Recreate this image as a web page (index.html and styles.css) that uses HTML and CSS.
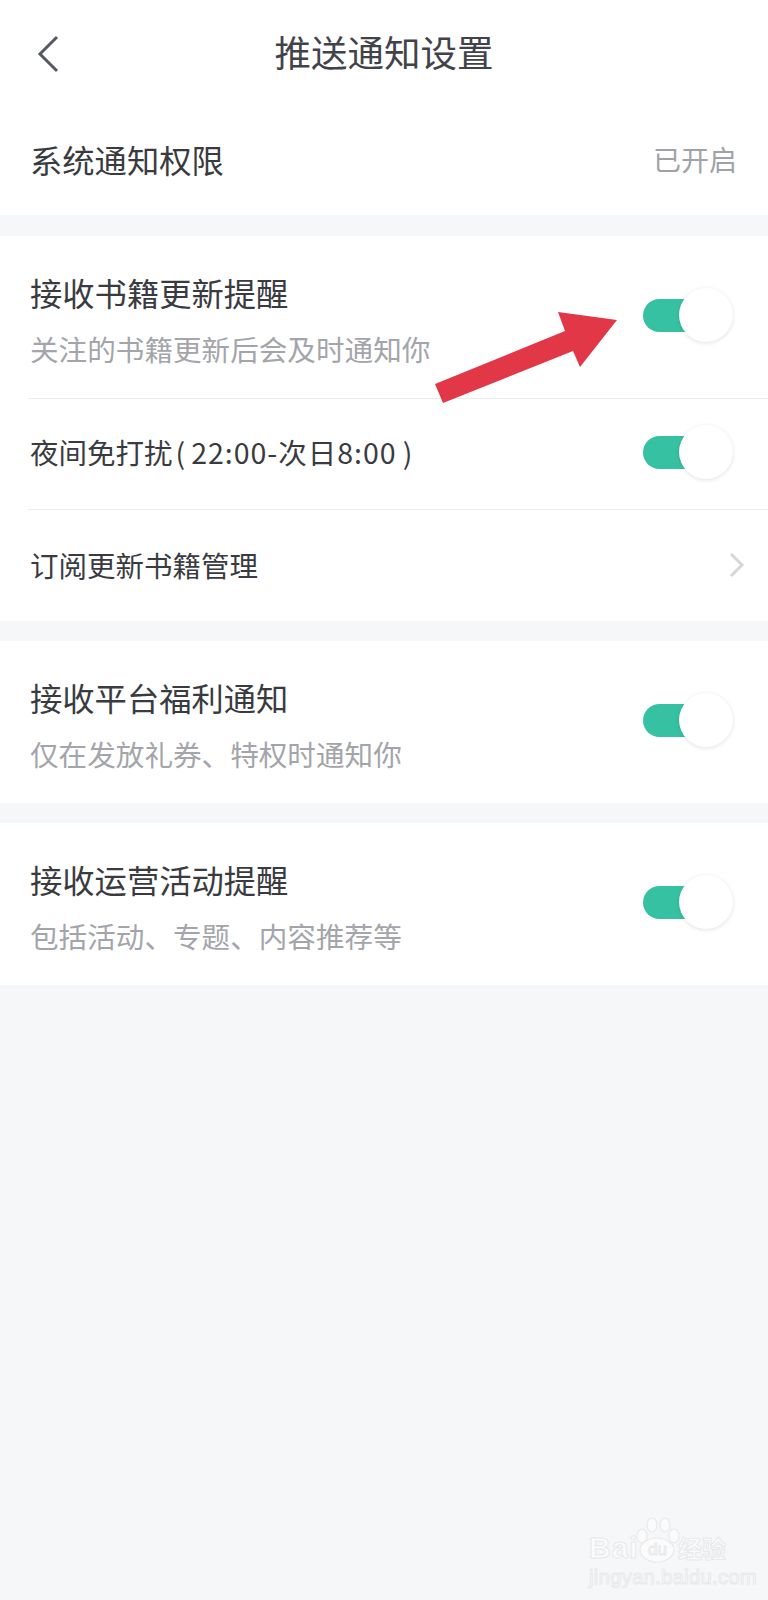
FILE: index.html
```html
<!DOCTYPE html>
<html lang="zh-CN">
<head>
	<meta charset="UTF-8">
	<title>推送通知设置</title>
	<link rel="stylesheet" href="styles.css">
</head>
<body>
	<div id="app">
		<header class="nav">
			<svg class="back" width="24" height="38" viewBox="0 0 24 38">
				<path d="M21 2 L4 19 L21 36" fill="none" stroke="#565960" stroke-width="3"/>
			</svg>
			<h1 class="nav-title">推送通知设置</h1>
		</header>

		<section class="group system">
			<div class="row row-system">
				<span class="label-lg">系统通知权限</span>
				<span class="status">已开启</span>
			</div>
		</section>

		<section class="group">
			<div class="row row-tall">
				<div class="text">
					<p class="label-lg">接收书籍更新提醒</p>
					<p class="sub">关注的书籍更新后会及时通知你</p>
				</div>
				<span class="toggle"></span>
			</div>
			<div class="row row-line">
				<span class="label label-night">夜间免打扰<span class="paren">(</span><span class="time">22:00-次日8:00</span><span class="paren">)</span></span>
				<span class="toggle"></span>
			</div>
			<div class="row row-line">
				<span class="label">订阅更新书籍管理</span>
				<svg class="more" width="18" height="26" viewBox="0 0 18 26">
					<path d="M3 2 L14 13 L3 24" fill="none" stroke="#d6d7da" stroke-width="3"/>
				</svg>
			</div>
		</section>

		<section class="group">
			<div class="row row-tall">
				<div class="text">
					<p class="label-lg">接收平台福利通知</p>
					<p class="sub">仅在发放礼券、特权时通知你</p>
				</div>
				<span class="toggle"></span>
			</div>
		</section>

		<section class="group">
			<div class="row row-tall">
				<div class="text">
					<p class="label-lg">接收运营活动提醒</p>
					<p class="sub">包括活动、专题、内容推荐等</p>
				</div>
				<span class="toggle"></span>
			</div>
		</section>

		<!-- red arrow drawn on top of the screenshot -->
		<svg class="arrow" width="768" height="420" viewBox="0 0 768 420">
			<polygon points="435,384 443,403 573,351 580,367 617,320 558,312 565,331" fill="#e13747"/>
		</svg>

		<div class="mark">
			<div class="mark-top">
				<span class="mark-bai">Bai</span>
				<span class="mark-paw">
					<svg width="44" height="46" viewBox="0 0 44 46">
						<g fill="#fbfbfc" stroke="#e8e9eb" stroke-width="1.2">
							<ellipse cx="6" cy="19" rx="5" ry="7"/>
							<ellipse cx="16" cy="8" rx="5" ry="7"/>
							<ellipse cx="29" cy="8" rx="5" ry="7"/>
							<ellipse cx="38" cy="19" rx="5" ry="7"/>
							<ellipse cx="21" cy="33" rx="17" ry="12"/>
						</g>
					</svg>
					<span class="mark-du">du</span>
				</span>
				<span class="mark-cn">经验</span>
			</div>
			<div class="mark-url">jingyan.baidu.com</div>
		</div>
	</div>
</body>
</html>
```

FILE: styles.css
```css
* {
	margin: 0;
	padding: 0;
	box-sizing: border-box;
}
html, body {
	height: 100%;
}
body {
	background-color: #f6f7f9;
	color: #3a3b41;
	font-family: "Noto Sans CJK SC", "Noto Sans", sans-serif;
}
#app {
	position: relative;
	width: 768px;
	height: 1600px;
	overflow: hidden;
}
.nav {
	position: relative;
	height: 108px;
	padding-bottom: 4px;
	background-color: #fff;
	display: flex;
	align-items: center;
	justify-content: center;
}
.back {
	position: absolute;
	left: 36px;
	top: 35px;
}
.nav-title {
	font-size: 36.5px;
	font-weight: 400;
	line-height: 50px;
	color: #42434a;
}
.group {
	background-color: #fff;
	margin-bottom: 20px;
}
.system {
	margin-bottom: 21px;
}
.row {
	display: flex;
	align-items: center;
	justify-content: space-between;
	padding-left: 30px;
}
.row-system {
	height: 107px;
	padding-right: 31px;
	padding-bottom: 6px;
}
.row-tall {
	height: 162px;
	padding-right: 35px;
}
.row-tall .text {
	padding-top: 5px;
}
.row-line {
	height: 111px;
	padding-right: 22px;
	position: relative;
}
.row-line:last-child {
	height: 112px;
}
.row-line::before {
	content: "";
	position: absolute;
	left: 28px;
	right: 0;
	top: 0;
	height: 1px;
	background-color: #ececee;
}
.row-line .toggle {
	margin-right: 13px;
}
.label-lg {
	display: block;
	font-size: 32.3px;
	line-height: 40px;
}
.label {
	font-size: 28.5px;
	line-height: 40px;
}
.label-night {
	margin-bottom: 4px;
}
.time {
	letter-spacing: 1px;
}
.paren {
	margin: 0 6px 0 3px;
}
.label .paren:last-child {
	margin: 0 0 0 6px;
}
.status {
	font-size: 28px;
	color: #a0a2a7;
}
.sub {
	margin-top: 19px;
	font-size: 28.6px;
	line-height: 36px;
	color: #a3a5aa;
}
.toggle {
	position: relative;
	flex: none;
	width: 90px;
	height: 54px;
	margin-bottom: 4px;
}
.toggle::before {
	content: "";
	position: absolute;
	left: 0;
	top: 11px;
	width: 62px;
	height: 33px;
	border-radius: 17px;
	background-color: #36c2a2;
}
.toggle::after {
	content: "";
	position: absolute;
	right: 0;
	top: 0;
	width: 54px;
	height: 54px;
	border-radius: 50%;
	background-color: #fff;
	box-shadow: 0 1px 4px rgba(0, 0, 0, 0.12);
}
.arrow {
	position: absolute;
	left: 0;
	top: 0;
}
.mark {
	position: absolute;
	left: 589px;
	top: 1517px;
	width: 140px;
	color: #fbfbfc;
	-webkit-text-stroke: 1px #e8e9eb;
}
.mark-top {
	display: flex;
	align-items: flex-end;
}
.mark-bai {
	font-family: "Liberation Sans", sans-serif;
	font-weight: 700;
	font-size: 30px;
	line-height: 30px;
	letter-spacing: 1px;
	width: 47px;
}
.mark-paw {
	position: relative;
	width: 44px;
	height: 46px;
}
.mark-du {
	position: absolute;
	left: 12px;
	top: 23px;
	font-family: "Liberation Sans", sans-serif;
	font-size: 17px;
	line-height: 20px;
}
.mark-cn {
	margin-left: -2px;
	font-size: 24px;
	line-height: 30px;
	font-weight: 700;
}
.mark-url {
	margin-top: 3px;
	font-family: "Liberation Sans", sans-serif;
	font-size: 20px;
	line-height: 22px;
	letter-spacing: 0.4px;
	white-space: nowrap;
}
```
